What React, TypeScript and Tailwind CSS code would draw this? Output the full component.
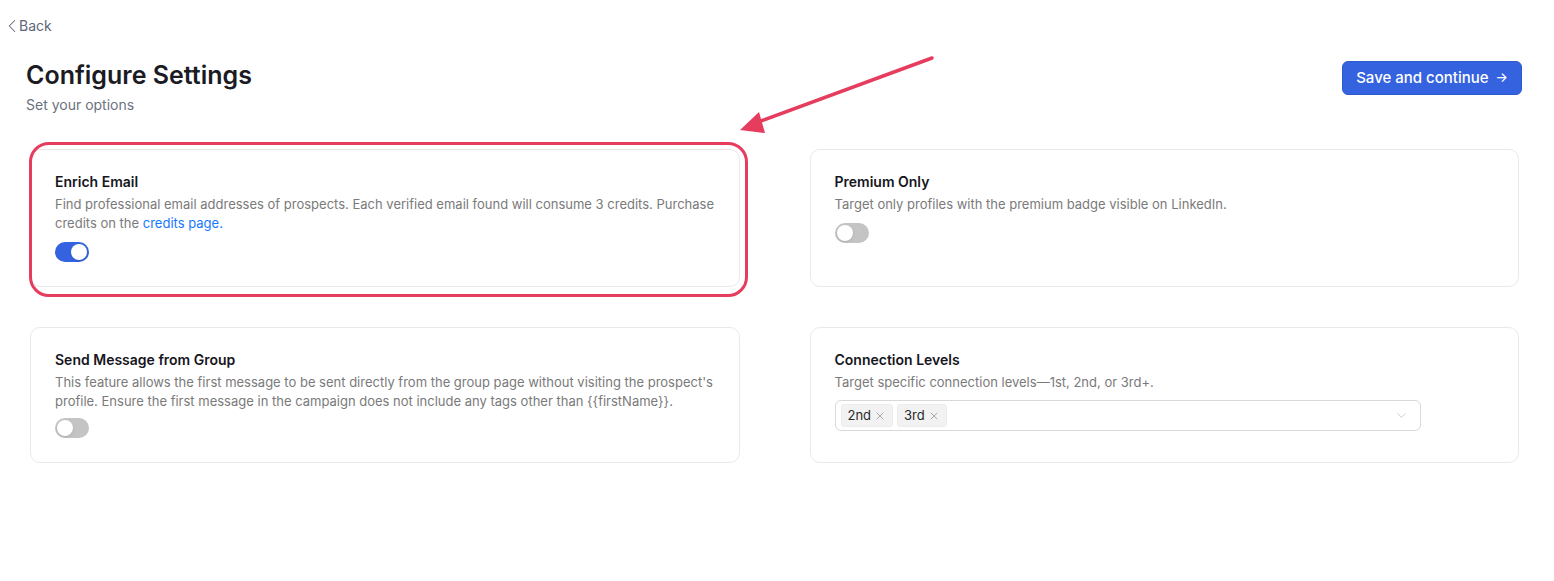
import { ChevronLeft, ChevronDown, X } from "lucide-react";

const font = "font-['Inter','Noto_Sans',sans-serif]";

const Toggle = ({ on }: { on: boolean }) => (
    <div className={`w-[34px] h-[20px] rounded-full flex items-center px-[2px] ${on ? "bg-[#3563e0] justify-end" : "bg-[#c4c4c4] justify-start"}`}>
        <div className="w-[16px] h-[16px] rounded-full bg-white shadow-sm" />
    </div>
)

const Card = ({ title, children }: { title: string; children: React.ReactNode }) => (
    <div className="border border-[#e9e9e9] rounded-[10px] pt-[22px] pb-[24px] px-[24px] bg-white">
        <h2 className="text-[14px] leading-[20px] font-semibold text-[#16161d]">{title}</h2>
        {children}
    </div>
)

const Tag = ({ label }: { label: string }) => (
    <div className="flex items-center gap-[3px] h-[23px] px-[6px] bg-[#f2f2f2] border border-[#ececec] rounded-[3px] text-[13px] text-[#2a2a2a]">
        {label}
        <X size={12} strokeWidth={1.4} className="text-[#8a8a8a]" />
    </div>
)

export default function App() {
    return (
        <div className={`relative min-h-screen bg-white ${font}`}>
            <div className="pl-[1px] pt-[16px]">
                <div className="flex items-center h-[20px] text-[14px] leading-[20px] text-[#5d6778]">
                    <ChevronLeft size={22} strokeWidth={1.1} className="-mr-[4px]" />
                    <span>Back</span>
                </div>
            </div>

            <div className="flex items-start justify-between pl-[26px] pr-[32px] mt-[23px]">
                <div>
                    <h1 className="text-[25px] leading-[32px] font-semibold text-[#1b1b24]">Configure Settings</h1>
                    <p className="mt-[4px] text-[14px] leading-[20px] text-[#6b7280]">Set your options</p>
                </div>
                <button className="mt-[2px] h-[34px] px-[13px] flex items-center gap-[7px] rounded-[6px] bg-[#3563e0] text-white text-[15px] font-medium border border-[#2f59cf]">
                    Save and continue
                    <span className="text-[13px]">→</span>
                </button>
            </div>

            <div className="grid grid-cols-2 gap-x-[70px] gap-y-[40px] pl-[30px] pr-[35px] mt-[34px]">
                <Card title="Enrich Email">
                    <p className="mt-[3px] text-[13px] leading-[19px] text-[#7a7a7a]">
                        Find professional email addresses of prospects. Each verified email found will consume 3 credits. Purchase credits on the <span className="text-[#1677ff]">credits page.</span>
                    </p>
                    <div className="mt-[9px]"><Toggle on /></div>
                </Card>
                <Card title="Premium Only">
                    <p className="mt-[3px] text-[13px] leading-[19px] text-[#7a7a7a]">
                        Target only profiles with the premium badge visible on LinkedIn.
                    </p>
                    <div className="mt-[9px]"><Toggle on={false} /></div>
                </Card>
                <Card title="Send Message from Group">
                    <p className="mt-[3px] text-[13px] leading-[19px] text-[#7a7a7a]">
                        This feature allows the first message to be sent directly from the group page without visiting the prospect's profile. Ensure the first message in the campaign does not include any tags other than {"{{firstName}}"}.
                    </p>
                    <div className="mt-[7px]"><Toggle on={false} /></div>
                </Card>
                <Card title="Connection Levels">
                    <p className="mt-[3px] text-[13px] leading-[19px] text-[#7a7a7a]">
                        Target specific connection levels—1st, 2nd, or 3rd+.
                    </p>
                    <div className="mt-[8px] w-[586px] h-[31px] border border-[#d9d9d9] rounded-[6px] flex items-center justify-between pl-[5px] pr-[11px]">
                        <div className="flex items-center gap-[4px]">
                            <Tag label="2nd" />
                            <Tag label="3rd" />
                        </div>
                        <ChevronDown size={15} strokeWidth={1.2} className="text-[#bdbdbd]" />
                    </div>
                </Card>
            </div>

            {/* annotation overlay */}
            <div className="absolute left-[29px] top-[142px] w-[719px] h-[155px] border-[3px] border-[#e63c5e] rounded-[20px] pointer-events-none" />
            <svg className="absolute left-0 top-0 pointer-events-none" width="1554" height="581">
                <line x1="932" y1="58" x2="758" y2="122" stroke="#e63c5e" strokeWidth="3.5" strokeLinecap="round" />
                <polygon points="740,130 759,112 765,133" fill="#e63c5e" />
            </svg>
        </div>
    )
}
